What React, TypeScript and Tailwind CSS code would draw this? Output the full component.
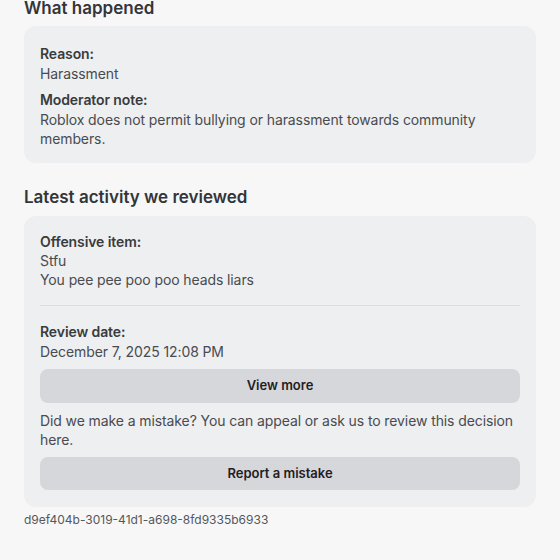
export default function App() {
  return (
    <div className="min-h-[560px] bg-[#f7f7f8] px-6 font-['Inter',sans-serif] text-[#393b3d] overflow-hidden">
      <h2 className="-mt-[3px] text-[17px] font-semibold leading-[22px] text-[#333539]">What happened</h2>
      <div className="mt-[7px] rounded-xl bg-[#eeeff1] px-4 pt-[18px] pb-[14px] text-[14px] leading-[19.5px] tracking-[-0.1px]">
        <p className="font-semibold text-[#393b3d]">Reason:</p>
        <p className="text-[#494b4f]">Harassment</p>
        <p className="mt-[7px] font-semibold text-[#393b3d]">Moderator note:</p>
        <p className="text-[#494b4f]">
          Roblox does not permit bullying or harassment towards community members.
        </p>
      </div>

      <h2 className="mt-[23px] text-[17px] font-semibold leading-[22px] text-[#333539]">
        Latest activity we reviewed
      </h2>
      <div className="mt-[8px] rounded-xl bg-[#eeeff1] px-4 pt-4 pb-[17px] text-[14px] leading-[19px] tracking-[-0.1px]">
        <p className="font-semibold">Offensive item:</p>
        <p className="text-[#494b4f]">Stfu</p>
        <p className="text-[#494b4f]">You pee pee poo poo heads liars</p>
        <div className="my-4 h-px bg-[#dcdde0]" />
        <p className="font-semibold">Review date:</p>
        <p className="mt-px text-[#494b4f]">December 7, 2025 12:08 PM</p>
        <button className="mt-2 flex h-[34px] w-full items-center justify-center rounded-lg bg-[#d6d7da] text-[13px] font-semibold tracking-normal text-[#1f2023]">
          View more
        </button>
        <p className="mt-2 text-[#494b4f]">
          Did we make a mistake? You can appeal or ask us to review this decision here.
        </p>
        <button className="mt-2 flex h-[33px] w-full items-center justify-center rounded-lg bg-[#d6d7da] text-[13px] font-semibold tracking-normal text-[#1f2023]">
          Report a mistake
        </button>
      </div>
      <p className="mt-[5px] text-[12px] leading-[16px] text-[#55575b]">d9ef404b-3019-41d1-a698-8fd9335b6933</p>
    </div>
  );
}
